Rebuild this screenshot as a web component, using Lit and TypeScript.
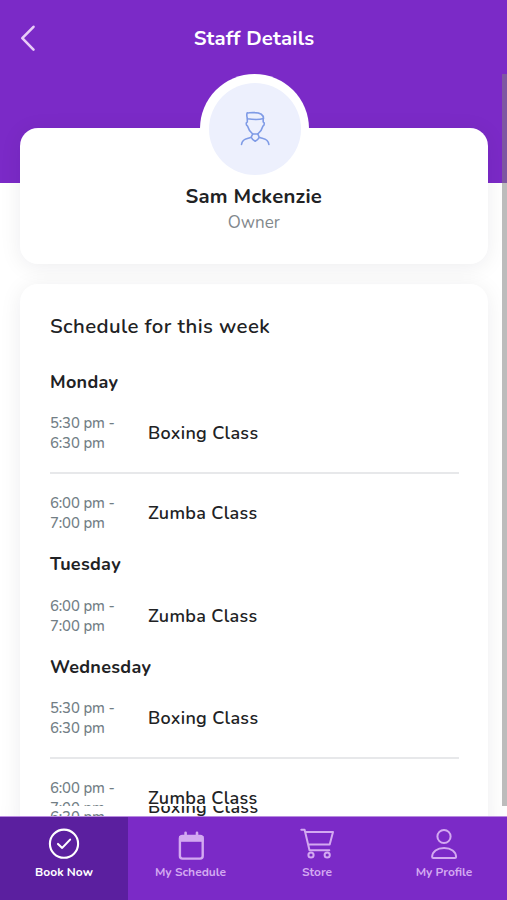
import { LitElement, html, css, svg } from "lit";
import { classMap } from "lit/directives/class-map.js";

interface Slot {
  from: string;
  to: string;
  name: string;
}

interface Day {
  title: string;
  slots: Slot[];
}

const boxing: Slot = { from: "5:30 pm -", to: "6:30 pm", name: "Boxing Class" };
const zumba: Slot = { from: "6:00 pm -", to: "7:00 pm", name: "Zumba Class" };

const week: Day[] = [
  { title: "Monday", slots: [boxing, zumba] },
  { title: "Tuesday", slots: [zumba] },
  { title: "Wednesday", slots: [boxing, zumba] },
];

const icons = {
  book: svg`<circle cx="20" cy="19.7" r="14.1" stroke-width="2.1"/><path d="M14 19.9l4.200 4 7.900-8.300" stroke-width="2.1"/>`,
  calendar: svg`<rect x="8.900" y="12" width="22.8" height="22.600" rx="2.600" stroke-width="2.400"/><path d="M8.100 12h24.400v5.800H8.100z" fill="currentColor" stroke="none"/><path d="M14.600 8.800v4M26 8.800v4" stroke-width="2.600"/>`,
  cart: svg`<path d="M4.300 5.700h3.300l4.900 20.500h19.800M8.500 8H36l-3.300 12.500H11.300" stroke-width="2"/><circle cx="14" cy="31" r="2.600" stroke-width="2"/><circle cx="30.200" cy="31" r="2.600" stroke-width="2"/>`,
  profile: svg`<circle cx="20" cy="12.500" r="6.600" stroke-width="2"/><path d="M8.100 32.700c.3-5 4.800-8.600 12-8.600s11.700 3.600 12 8.600c0 .8-.4 1.300-1.200 1.300H9.300c-.8 0-1.200-.5-1.200-1.300z" stroke-width="2"/>`,
};

const tabs = [
  { label: "Book Now", icon: icons.book, active: true },
  { label: "My Schedule", icon: icons.calendar, active: false },
  { label: "Store", icon: icons.cart, active: false },
  { label: "My Profile", icon: icons.profile, active: false },
];

class AppRoot extends LitElement {
  static styles = css`
    :host {
      display: flex;
      flex-direction: column;
      position: relative;
      height: 900px;
      overflow: hidden;
      background: #fff;
      color: #212224;
      font-family: Nunito, Lato, "Open Sans", sans-serif;
    }
    * { box-sizing: border-box; }
    svg { display: block; fill: none; stroke: currentColor; stroke-linecap: round; stroke-linejoin: round; }

    .view { height: 806px; overflow: hidden; flex: none; }
    .banner { height: 183px; background: #7b2ac7; }
    .bar {
      height: 74px;
      display: grid;
      grid-template-columns: 60px 1fr 60px;
      align-items: center;
      padding-top: 2px;
      color: #fff;
    }
    .back { color: #e9cdf8; padding: 0 0 1px 18px; }
    .bar h1 { margin: 0; padding-left: 1px; text-align: center; font-size: 20.300px; font-weight: 700; letter-spacing: 0.2px; line-height: 28px; }

    .card {
      margin: 0 19.500px 0 20px;
      background: #fff;
      border-radius: 18px;
      box-shadow: 0 3px 22px rgba(20, 20, 40, 0.075);
    }
    .person {
      position: relative;
      margin-top: -55px;
      height: 136px;
      display: flex;
      flex-direction: column;
      align-items: center;
    }
    .avatar {
      width: 109px;
      height: 109px;
      margin: -54px 0 0 1.500px;
      border-radius: 50%;
      background: #fff;
      padding: 8.500px;
      flex: none;
    }
    .face {
      width: 92px;
      height: 92px;
      border-radius: 50%;
      background: #edf0fd;
      color: #7f9be6;
      display: grid;
      place-items: center;
    }
    .name { font-size: 20.300px; font-weight: 700; letter-spacing: 0.250px; line-height: 27px; }
    .role { font-size: 17px; line-height: 26px; color: #82888c; }

    .schedule { margin-top: 20px; padding: 29px 29px 0 30px; height: 560px; border-radius: 18px 18px 0 0; }
    .schedule h2 { margin: 0 0 31.500px; font-size: 20.400px; font-weight: 600; letter-spacing: 0.400px; line-height: 26px; }
    .day { margin: 0; padding-top: 0.400px; font-size: 18px; font-weight: 700; letter-spacing: 0.3px; line-height: 23px; }
    .row {
      display: grid;
      grid-template-columns: 98px 1fr;
      align-items: center;
      height: 79.400px;
    }
    .row.ruled { height: 80.100px; margin-bottom: -0.700px; border-bottom: 2px solid #e7e8ea; padding-top: 0.300px; }
    .time { font-size: 14.900px; font-weight: 500; letter-spacing: -0.150px; line-height: 19.600px; padding-top: 1.500px; color: #727e85; }
    .class { font-size: 18px; font-weight: 650; letter-spacing: 0.300px; line-height: 24px; }

    .peek { height: 10px; overflow: hidden; flex: none; display: flex; flex-direction: column; }
    .peek .card { border-radius: 0; flex: none; margin-top: -38.500px; width: 467.500px; padding: 0 29px 0 30px; }

    .tabs {
      flex: 1;
      display: grid;
      grid-template-columns: 128px 125px 128px 126px;
      background: #7b2ac7;
      border-top: 1px solid #b98ae0;
    }
    .tab {
      display: flex;
      flex-direction: column;
      align-items: center;
      padding-top: 7px;
      color: #d3a9f1;
      font-size: 12px;
      font-weight: 700;
      line-height: 16px;
    }
    .tab.active { background: #5b1f9f; color: #fff; }

    .thumb {
      position: absolute;
      right: 0;
      top: 74px;
      width: 5px;
      height: 732px;
      background: rgba(128, 128, 128, 0.53);
    }
  `;

  private row(slot: Slot, ruled: boolean) {
    return html`<div class=${classMap({ row: true, ruled })}>
      <div class="time">${slot.from}<br />${slot.to}</div>
      <div class="class">${slot.name}</div>
    </div>`;
  }

  render() {
    return html`
      <div class="view">
        <div class="banner">
          <div class="bar">
            <div class="back">
              <svg width="20" height="28" viewBox="0 0 20 28" stroke-width="2.600"><path d="M15.500 2.800L4.300 14.200 15.500 25.600" /></svg>
            </div>
            <h1>Staff Details</h1>
          </div>
        </div>
        <section class="card person">
          <div class="avatar">
            <div class="face">
              <svg width="32" height="36" viewBox="0 0 32 36" stroke-width="1.600">
                <path d="M8.200 1.800c1.200.5 3-.4 7-.2 5.500 0 9.300 1.700 9.300 6-5 1.300-10.500 1-16 .1-.8-2-.8-4.500-.3-5.900z" />
                <path d="M8.300 7.700v3.400c-1.600.5-1.300 3.300.2 3.900.8 3 3.300 6.400 5.200 8h5.100c1.900-1.600 4.400-5 5.200-8 1.500-.6 1.800-3.400.2-3.900V7.700" />
                <path d="M13.700 23l-1.500 3.200c.8 2 2.500 3.200 4 4 1.500-.8 3.200-2 4-4L18.800 23M12.200 26.200c-3 1.700-9 .8-9.700 7.300M20.200 26.200c3 1.700 9 .8 9.700 7.300" />
              </svg>
            </div>
          </div>
          <div class="name">Sam Mckenzie</div>
          <div class="role">Owner</div>
        </section>
        <section class="card schedule">
          <h2>Schedule for this week</h2>
          ${week.map(
            (d) => html`<h3 class="day">${d.title}</h3>
              ${d.slots.map((s, i) => this.row(s, i < d.slots.length - 1))}`
          )}
        </section>
      </div>
      <div class="peek"><div class="card">${this.row(boxing, false)}</div></div>
      <nav class="tabs">
        ${tabs.map(
          (t) => html`<div class=${classMap({ tab: true, active: t.active })}>
            <svg width="40" height="40" viewBox="0 0 40 40">${t.icon}</svg>
            <span>${t.label}</span>
          </div>`
        )}
      </nav>
      <div class="thumb"></div>
    `;
  }
}

customElements.define("app-root", AppRoot);
